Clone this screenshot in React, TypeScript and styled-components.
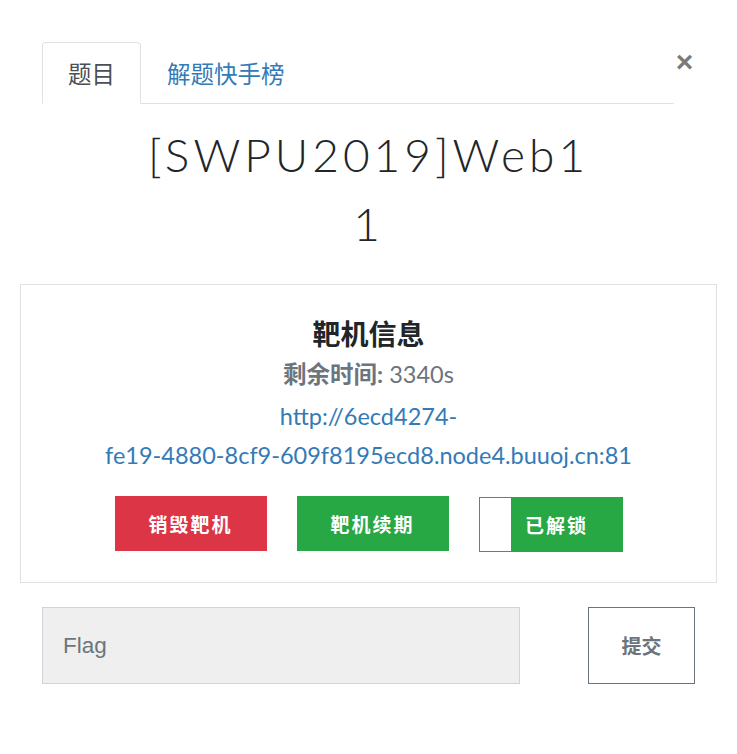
import React from 'react';
import styled, { createGlobalStyle } from 'styled-components';

const GlobalStyle = createGlobalStyle`
  html, body {
    margin: 0;
    padding: 0;
    background: #fff;
  }
  body {
    font-family: Lato, "Noto Sans CJK SC", sans-serif;
    color: #212529;
  }
`;

const Modal = styled.div`
  width: 737px;
  padding: 42px 20px 0;
  box-sizing: border-box;
`;

const Header = styled.div`
  display: flex;
  align-items: flex-start;
  padding: 0 22px;
`;

const Tabs = styled.ul`
  flex: 1;
  display: flex;
  margin: 0;
  padding: 0;
  list-style: none;
  border-bottom: 1px solid #dee2e6;
`;

const Tab = styled.li<{ $active?: boolean }>`
  margin-bottom: -1px;
  height: 62px;
  box-sizing: border-box;
  display: flex;
  align-items: center;
  padding: 0 25px;
  font-family: "Noto Sans CJK SC", sans-serif;
  font-size: 23.5px;
  color: ${p => (p.$active ? '#495057' : '#337ab7')};
  background: ${p => (p.$active ? '#fff' : 'transparent')};
  border: 1px solid ${p => (p.$active ? '#dee2e6' : 'transparent')};
  border-bottom-color: ${p => (p.$active ? '#fff' : 'transparent')};
  border-radius: 4px 4px 0 0;
`;

const Close = styled.button`
  width: 21px;
  height: 40px;
  padding: 0;
  border: 0;
  background: transparent;
  font-family: "Liberation Sans", Arial, sans-serif;
  font-size: 30px;
  font-weight: 700;
  line-height: 40px;
  color: #7a7a7a;
  text-align: center;
`;

const Title = styled.h2`
  margin: 16px 0 26px;
  text-align: center;
  font-family: Lato, sans-serif;
  font-weight: 300;
  font-size: 46px;
  line-height: 69px;
  letter-spacing: 4px;
  color: #212529;
`;

const Card = styled.div`
  border: 1px solid #dee2e6;
  padding: 30px 20px 30px;
  text-align: center;
`;

const CardTitle = styled.h3`
  margin: 0;
  font-family: "Noto Sans CJK SC", sans-serif;
  font-size: 28px;
  font-weight: 700;
  line-height: 36px;
  color: #212529;
`;

const Remain = styled.div`
  margin-top: 8px;
  font-size: 23.5px;
  line-height: 30px;
  color: #6c757d;

  b {
    font-family: Lato, "Noto Sans CJK SC", sans-serif;
    font-weight: 700;
  }
`;

const Url = styled.a`
  display: block;
  max-width: 580px;
  margin: 8px auto 0;
  font-family: Lato, sans-serif;
  font-size: 23.5px;
  line-height: 39px;
  color: #337ab7;
  text-decoration: none;
`;

const Host = styled.span`
  white-space: nowrap;
`;

const Actions = styled.div`
  display: flex;
  justify-content: center;
  align-items: flex-start;
  gap: 30px;
  margin-top: 21px;
`;

const ActionButton = styled.button<{ $tone: 'danger' | 'success' }>`
  width: 152px;
  height: 55px;
  border: 0;
  padding: 0;
  font-family: "Noto Sans CJK SC", sans-serif;
  font-size: 19px;
  font-weight: 700;
  letter-spacing: 2px;
  color: #fff;
  background: ${p => (p.$tone === 'danger' ? '#dc3545' : '#28a745')};
`;

const UnlockedButton = styled.button`
  width: 144px;
  height: 55px;
  margin-top: 1px;
  box-sizing: border-box;
  border: 1px solid #28a745;
  padding: 0 0 0 12px;
  font-family: "Noto Sans CJK SC", sans-serif;
  font-size: 19px;
  font-weight: 700;
  letter-spacing: 2px;
  color: #fff;
  background: linear-gradient(to right, #fff 0 31px, #28a745 31px);
`;

const FlagRow = styled.form`
  display: flex;
  justify-content: space-between;
  margin-top: 24px;
  padding: 0 22px;
`;

const FlagInput = styled.input`
  width: 478px;
  height: 77px;
  box-sizing: border-box;
  padding: 0 20px;
  border: 1px solid #ced4da;
  background: #efefef;
  font-family: "Liberation Sans", Arial, sans-serif;
  font-size: 22.5px;
  color: #495057;
  outline: none;

  &::placeholder {
    color: #6c757d;
  }
`;

const SubmitButton = styled.button`
  width: 107px;
  height: 77px;
  box-sizing: border-box;
  border: 1px solid #6c757d;
  background: #fff;
  font-family: "Noto Sans CJK SC", sans-serif;
  font-size: 20px;
  font-weight: 700;
  color: #6c757d;
`;

export default function App() {
  return (
    <Modal>
      <GlobalStyle />
      <Header>
        <Tabs>
          <Tab $active>题目</Tab>
          <Tab>解题快手榜</Tab>
        </Tabs>
        <Close type="button">×</Close>
      </Header>
      <Title>
        [SWPU2019]Web1
        <br />1
      </Title>
      <Card>
        <CardTitle>靶机信息</CardTitle>
        <Remain>
          <b>剩余时间:</b> 3340s
        </Remain>
        <Url href="#">
          http://6ecd4274-<Host>fe19-4880-8cf9-609f8195ecd8.node4.buuoj.cn:81</Host>
        </Url>
        <Actions>
          <ActionButton $tone="danger">销毁靶机</ActionButton>
          <ActionButton $tone="success">靶机续期</ActionButton>
          <UnlockedButton>已解锁</UnlockedButton>
        </Actions>
      </Card>
      <FlagRow onSubmit={e => e.preventDefault()}>
        <FlagInput placeholder="Flag" />
        <SubmitButton type="submit">提交</SubmitButton>
      </FlagRow>
    </Modal>
  );
}
